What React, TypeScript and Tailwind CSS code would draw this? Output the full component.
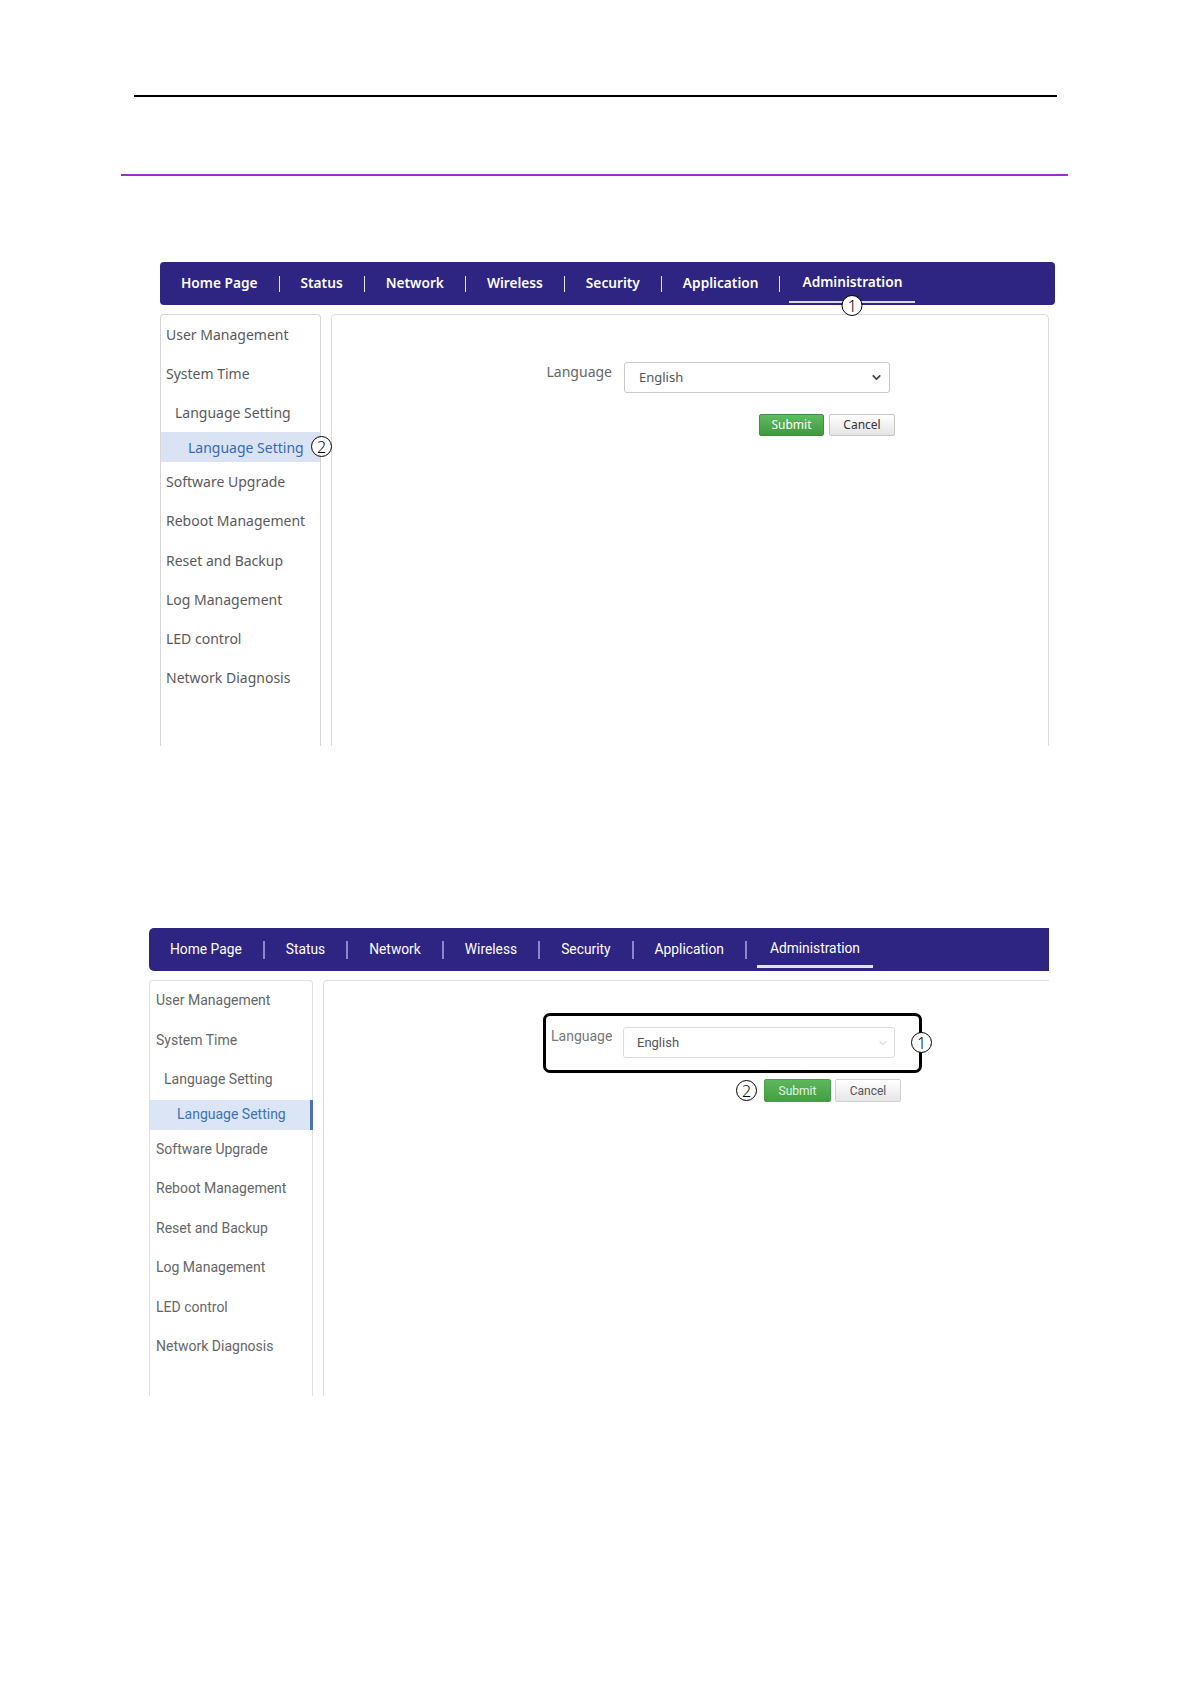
import { ChevronDown } from 'lucide-react';

const NAV_ITEMS = ['Home Page', 'Status', 'Network', 'Wireless', 'Security', 'Application'];

const MENU = [
  { label: 'User Management', level: 0 },
  { label: 'System Time', level: 0 },
  { label: 'Language Setting', level: 1 },
  { label: 'Language Setting', level: 2 },
  { label: 'Software Upgrade', level: 0 },
  { label: 'Reboot Management', level: 0 },
  { label: 'Reset and Backup', level: 0 },
  { label: 'Log Management', level: 0 },
  { label: 'LED control', level: 0 },
  { label: 'Network Diagnosis', level: 0 },
];

function Circled({ n, className = '' }: { n: number; className?: string }) {
  return (
    <span
      className={`flex items-center justify-center w-[21px] h-[21px] rounded-full border border-black bg-white text-black text-[16px] leading-none font-light font-['Noto_Sans',sans-serif] ${className}`}
    >
      {n}
    </span>
  );
}

// First capture: older UI (bold nav, Noto Sans)
function OldScreen() {
  return (
    <section className="ml-[160px] w-[895px] font-['Noto_Sans',sans-serif]">
      <nav className="h-[43px] rounded-[4px] bg-[#2e2482] flex items-stretch text-white text-[13.7px] font-semibold">
        {NAV_ITEMS.map((item) => (
          <div key={item} className="flex items-center">
            <span className="px-[21px]">{item}</span>
            <span className="w-px h-[16px] bg-[#e6e4f2]" />
          </div>
        ))}
        <div className="relative ml-[9px] px-[13px] flex items-center">
          <span className="-mt-[2px]">Administration</span>
          <span className="absolute left-0 right-0 bottom-[2px] h-[2px] bg-[#d9d7ea]" />
          <Circled n={1} className="absolute z-10 left-1/2 -translate-x-1/2 top-[33px]" />
        </div>
      </nav>

      <div className="mt-[9px] flex gap-[10px]">
        <aside className="w-[161px] h-[432px] border border-b-0 border-[#d6d6d6] rounded-t-[4px] text-[14px] text-[#5a5a5a]">
          {MENU.map((m, i) =>
            m.level === 2 ? (
              <div key={i} className="relative h-[30px] flex items-center pl-[27px] bg-[#dae3f4] text-[#3769b0]">
                {m.label}
                <Circled n={2} className="absolute z-10 right-[-12px] top-[4px]" />
              </div>
            ) : (
              <div key={i} className={`h-[39.1px] flex items-center ${m.level === 1 ? 'pl-[14px]' : 'pl-[5px]'}`}>
                {m.label}
              </div>
            )
          )}
        </aside>

        <div className="w-[718px] h-[432px] border border-b-0 border-[#dcdcdc] rounded-t-[5px] pt-[47px]">
          <div className="ml-[208px] flex items-start">
            <span className="w-[72px] text-right text-[14px] leading-[20px] text-[#666]">Language</span>
            <div className="ml-[12px] w-[266px] h-[31px] border border-[#c9c9c9] rounded-[3px] flex items-center justify-between pl-[14px] pr-[6px] text-[13px] text-[#555]">
              English
              <ChevronDown size={13} strokeWidth={3.2} className="text-[#444]" />
            </div>
          </div>
          <div className="ml-[208px] mt-[21px] w-[355px] flex justify-end gap-[5px] text-[12px]">
            <button className="w-[65px] h-[22px] rounded-[2px] border border-[#3e8f3e] bg-gradient-to-b from-[#5fbb5f] to-[#3f9a3f] text-white">
              Submit
            </button>
            <button className="w-[66px] h-[22px] rounded-[2px] border border-[#c8c8c8] bg-gradient-to-b from-white to-[#e4e4e4] text-[#333]">
              Cancel
            </button>
          </div>
        </div>
      </div>
    </section>
  );
}

// Second capture: newer UI (Roboto)
function NewScreen() {
  return (
    <section className="ml-[149px] w-[900px] font-['Roboto',sans-serif]">
      <nav className="h-[43px] rounded-l-[5px] bg-[#2e2482] flex items-stretch text-white text-[13.8px]">
        {NAV_ITEMS.map((item) => (
          <div key={item} className="flex items-center">
            <span className="px-[21px]">{item}</span>
            <span className="w-[2px] h-[18px] bg-[#8c86cf]" />
          </div>
        ))}
        <div className="relative ml-[10px] px-[13px] flex items-center">
          <span className="-mt-[2px]">Administration</span>
          <span className="absolute left-0 right-0 bottom-[3px] h-[3px] bg-[#e4e2f2]" />
        </div>
      </nav>

      <div className="mt-[9px] flex gap-[10px]">
        <aside className="w-[164px] h-[416px] border border-b-0 border-[#e0e0e0] rounded-t-[4px] text-[14px] text-[#666]">
          {MENU.map((m, i) =>
            m.level === 2 ? (
              <div key={i} className="h-[30px] flex items-center pl-[27px] bg-[#dce5f6] text-[#3d73b3] border-r-[3px] border-[#4874b2] -mr-px">
                {m.label}
              </div>
            ) : (
              <div key={i} className={`h-[39.5px] flex items-center ${m.level === 1 ? 'pl-[14px]' : 'pl-[6px]'}`}>
                {m.label}
              </div>
            )
          )}
        </aside>

        <div className="flex-1 h-[416px] border-t border-l border-[#e0e0e0] rounded-tl-[4px] pt-[32px]">
          <div className="relative ml-[219px] w-[379px] h-[60px] border-[3px] border-black rounded-[7px] pl-[5px] pt-[10px] flex items-start">
            <span className="w-[72px] text-[14px] leading-[20px] text-[#777]">Language</span>
            <div className="w-[272px] h-[31px] mt-[1px] border border-[#dcdcdc] rounded-[3px] flex items-center justify-between pl-[13px] pr-[5px] text-[13px] text-[#555]">
              English
              <ChevronDown size={12} strokeWidth={1.2} className="text-[#999]" />
            </div>
            <Circled n={1} className="absolute right-[-13px] top-[16px]" />
          </div>
          <div className="ml-[219px] mt-[6px] w-[358px] flex items-center justify-end text-[12px]">
            <Circled n={2} className="mr-[7px]" />
            <button className="w-[67px] h-[23px] rounded-[2px] border border-[#46a046] bg-gradient-to-b from-[#5cb85c] to-[#449d44] text-[#e3f5e3]">
              Submit
            </button>
            <button className="ml-[4px] w-[66px] h-[23px] rounded-[2px] border border-[#d0d0d0] bg-gradient-to-b from-white to-[#e6e6e6] text-[#555]">
              Cancel
            </button>
          </div>
        </div>
      </div>
    </section>
  );
}

export default function App() {
  return (
    <div className="w-[1190px] min-h-[1684px] bg-white pt-[95px]">
      <div className="ml-[134px] w-[923px] h-[2px] bg-black" />
      <div className="ml-[121px] mt-[77px] w-[947px] h-[2px] bg-[#9a2fcf]" />
      <div className="mt-[86px]">
        <OldScreen />
      </div>
      <div className="mt-[182px]">
        <NewScreen />
      </div>
    </div>
  );
}
